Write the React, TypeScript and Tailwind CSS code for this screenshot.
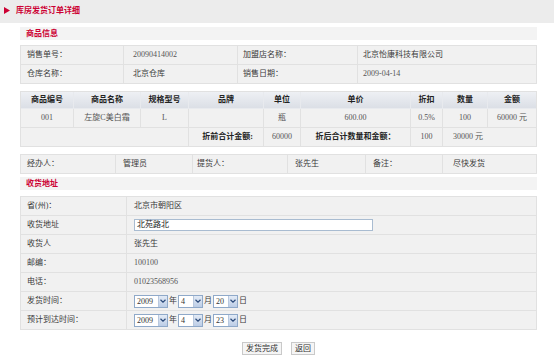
import React from "react";

const cell = "flex items-center border-r border-b border-[#e1e1e1] last:border-r-0";

function Sel({ v, w }: { v: string; w: string }) {
  return (
    <div className={`flex h-[13px] ${w} border border-[#8fa9c9] bg-white`}>
      <div className="flex-1 pl-[2px] text-[8px] leading-[11px] text-[#333]">{v}</div>
      <div className="flex w-[9px] items-center justify-center bg-gradient-to-b from-[#e3ebf6] to-[#bccde6] border-l border-[#b8c8de]">
        <svg width="6" height="4" viewBox="0 0 6 4">
          <path d="M0.5 0.8 L3 3.2 L5.5 0.8" stroke="#2b4a7a" strokeWidth="1.2" fill="none" />
        </svg>
      </div>
    </div>
  );
}

export default function App() {
  const font = "font-['Liberation_Serif','Noto_Sans_CJK_SC',serif]";
  return (
    <div className={`w-[554px] h-[364px] bg-white antialiased ${font} text-[8px] text-[#3a3a3a]`}>
      {/* header */}
      <div className="flex h-[23px] items-center bg-[#ececec] pl-[4px] pb-[2px]">
        <svg width="6" height="7" viewBox="0 0 6 7" className="mr-[6px]">
          <polygon points="0,0 6,3.5 0,7" fill="#cc0033" />
        </svg>
        <span className="font-bold text-[#cc0033] text-[8px]">库房发货订单详细</span>
      </div>

      <div className="ml-[20px] w-[517px]">
        {/* 商品信息 */}
        <div className="mt-[4px] flex h-[13px] items-center bg-[#f3f3f3] pl-[6px] font-bold text-[#cc0033]">商品信息</div>

        {/* table 1 */}
        <div className="mt-[5px] border border-[#e1e1e1] bg-[#f1f1f1]">
          <div className="grid grid-cols-[103px_114px_120px_1fr] h-[19px]">
            <div className={`${cell} pl-[6px]`}>销售单号：</div>
            <div className={`${cell} pl-[9px] text-[#555]`}>20090414002</div>
            <div className={`${cell} pl-[5px]`}>加盟店名称：</div>
            <div className={`${cell} pl-[5px]`}>北京怡康科技有限公司</div>
          </div>
          <div className="grid grid-cols-[103px_114px_120px_1fr] h-[18px]">
            <div className={`${cell} pl-[6px] border-b-0`}>仓库名称：</div>
            <div className={`${cell} pl-[9px] border-b-0`}>北京仓库</div>
            <div className={`${cell} pl-[5px] border-b-0`}>销售日期：</div>
            <div className={`${cell} pl-[5px] border-b-0 text-[#555]`}>2009-04-14</div>
          </div>
        </div>

        {/* table 2 */}
        <div className="mt-[7px] border border-[#e1e1e1] bg-[#f1f1f1]">
          <div className="grid grid-cols-[53px_67px_48px_75px_37px_110px_32px_45px_1fr] h-[17px] bg-gradient-to-b from-[#eef0f4] to-[#dadee5] font-bold text-[#222]">
            {["商品编号", "商品名称", "规格型号", "品牌", "单位", "单价", "折扣", "数量", "金额"].map((t) => (
              <div key={t} className={`${cell} justify-center border-[#e8eaee]`}>{t}</div>
            ))}
          </div>
          <div className="grid grid-cols-[53px_67px_48px_75px_37px_110px_32px_45px_1fr] h-[19px] text-[#555]">
            {["001", "左旋C美白霜", "L", "", "瓶", "600.00", "0.5%", "100", "60000 元"].map((t, i) => (
              <div key={i} className={`${cell} justify-center`}>{t}</div>
            ))}
          </div>
          <div className="grid grid-cols-[168px_75px_37px_110px_32px_1fr] h-[18px] text-[#555]">
            <div className={`${cell} border-b-0`}></div>
            <div className={`${cell} border-b-0 justify-end pr-[10px] font-bold text-[#222]`}>折前合计金额:</div>
            <div className={`${cell} border-b-0 justify-center`}>60000</div>
            <div className={`${cell} border-b-0 justify-center font-bold text-[#222]`}>折后合计数量和金额：</div>
            <div className={`${cell} border-b-0 justify-center`}>100</div>
            <div className={`${cell} border-b-0 pl-[10px]`}>30000 元</div>
          </div>
        </div>

        {/* table 3 */}
        <div className="mt-[7px] border border-[#e1e1e1] bg-[#f1f1f1]">
          <div className="grid grid-cols-[95px_77px_95px_78px_77px_1fr] h-[18px]">
            <div className={`${cell} border-b-0 pl-[6px]`}>经办人：</div>
            <div className={`${cell} border-b-0 pl-[7px]`}>管理员</div>
            <div className={`${cell} border-b-0 pl-[4px]`}>提货人：</div>
            <div className={`${cell} border-b-0 pl-[7px]`}>张先生</div>
            <div className={`${cell} border-b-0 pl-[7px]`}>备注：</div>
            <div className={`${cell} border-b-0 pl-[10px]`}>尽快发货</div>
          </div>
        </div>

        {/* 收货地址 */}
        <div className="mt-[3px] flex h-[13px] items-center bg-[#f3f3f3] pl-[6px] font-bold text-[#cc0033]">收货地址</div>

        {/* table 4 */}
        <div className="mt-[6px] border border-[#e1e1e1] bg-[#f1f1f1]">
          {[
            ["省(州)：", "北京市朝阳区"],
            ["收货地址", "__input"],
            ["收货人", "张先生"],
            ["邮编：", "100100"],
            ["电话：", "01023568956"],
            ["发货时间：", "__d1"],
            ["预计到达时间：", "__d2"],
          ].map(([l, v], i) => (
            <div key={i} className={`grid grid-cols-[106px_1fr] ${i === 6 ? "h-[18px]" : "h-[19px]"}`}>
              <div className={`${cell} pl-[6px] ${i === 6 ? "border-b-0" : ""}`}>{l}</div>
              <div className={`${cell} pl-[7px] ${i === 6 ? "border-b-0" : ""} ${i === 3 || i === 4 ? "text-[#555]" : ""}`}>
                {v === "__input" ? (
                  <div className="flex h-[12px] w-[239px] items-center border border-[#a9bcd1] bg-white pl-[2px] text-[#222]">北苑路北</div>
                ) : v === "__d1" || v === "__d2" ? (
                  <div className="flex items-center">
                    <Sel v="2009" w="w-[34px]" />
                    <span className="mx-[1px]">年</span>
                    <Sel v="4" w="w-[25px]" />
                    <span className="mx-[1px]">月</span>
                    <Sel v={v === "__d1" ? "20" : "23"} w="w-[25px]" />
                    <span className="ml-[1px]">日</span>
                  </div>
                ) : (
                  v
                )}
              </div>
            </div>
          ))}
        </div>

        {/* buttons */}
        <div className="mt-[12px] flex justify-center gap-[9px]">
          <div className="flex h-[13px] items-center border border-[#c9c9c9] bg-[#f5f5f5] px-[3px] text-[#333]">发货完成</div>
          <div className="flex h-[13px] items-center border border-[#c9c9c9] bg-[#f5f5f5] px-[3px] text-[#333]">返回</div>
        </div>
      </div>
    </div>
  );
}
